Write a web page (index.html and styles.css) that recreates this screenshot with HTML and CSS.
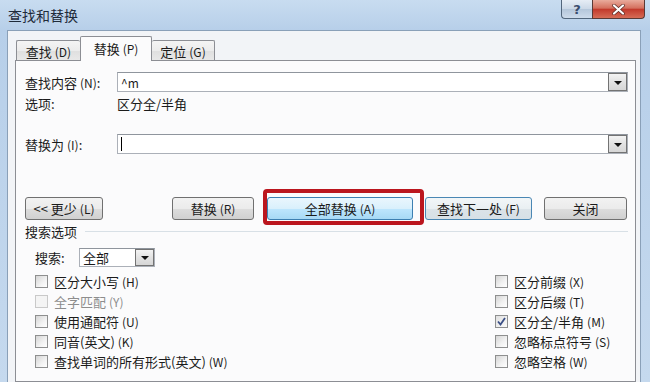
FILE: index.html
```html
<!DOCTYPE html>
<html lang="zh-CN">
<head>
    <meta charset="UTF-8">
    <title>查找和替换</title>
    <link rel="stylesheet" href="styles.css">
</head>
<body>
<div class="window">
    <div class="titlebar">
        <span class="title">查找和替换</span>
        <div class="caption">
            <span class="cap-help">?</span>
            <span class="cap-close">
                <svg width="13" height="11" viewBox="0 0 13 11"><path d="M2 1.5 L11 9.5 M11 1.5 L2 9.5" stroke="#5a2a24" stroke-width="3.6" stroke-linecap="round"/><path d="M2 1.5 L11 9.5 M11 1.5 L2 9.5" stroke="#fff" stroke-width="2.2" stroke-linecap="round"/></svg>
            </span>
        </div>
    </div>

    <div class="client">
        <div class="tabs">
            <div class="tab tab-find">查找<span class="key">(D)</span></div>
            <div class="tab tab-replace">替换<span class="key">(P)</span></div>
            <div class="tab tab-goto">定位<span class="key">(G)</span></div>
        </div>

        <div class="panel">
            <div class="field">
                <span class="label">查找内容<span class="key">(N)</span>:</span>
                <div class="combo"><span class="combo-text">^m</span><span class="drop"><i class="arrow"></i></span></div>
            </div>
            <div class="field options">
                <span class="label">选项:</span>
                <span>区分全/半角</span>
            </div>
            <div class="field replace">
                <span class="label">替换为<span class="key">(I)</span>:</span>
                <div class="combo"><span class="caret"></span><span class="drop"><i class="arrow"></i></span></div>
            </div>

            <div class="buttons">
                <button class="btn btn-less">&lt;&lt; 更少<span class="key">(L)</span></button>
                <button class="btn btn-rep">替换<span class="key">(R)</span></button>
                <button class="btn btn-all">全部替换<span class="key">(A)</span></button>
                <button class="btn btn-next">查找下一处<span class="key">(F)</span></button>
                <button class="btn btn-close">关闭</button>
            </div>

            <div class="group-title"><span>搜索选项</span><span class="rule"></span></div>

            <div class="search-row">
                <span class="search-label">搜索:</span>
                <div class="combo select"><span class="combo-text">全部</span><span class="drop"><i class="arrow"></i></span></div>
            </div>

            <div class="checks">
                <div class="col col-left">
                    <div class="check"><span class="box"></span>区分大小写<span class="key">(H)</span></div>
                    <div class="check disabled"><span class="box"></span>全字匹配<span class="key">(Y)</span></div>
                    <div class="check"><span class="box"></span>使用通配符<span class="key">(U)</span></div>
                    <div class="check"><span class="box"></span>同音(英文)<span class="key">(K)</span></div>
                    <div class="check"><span class="box"></span>查找单词的所有形式(英文)<span class="key">(W)</span></div>
                </div>
                <div class="col col-right">
                    <div class="check"><span class="box"></span>区分前缀<span class="key">(X)</span></div>
                    <div class="check"><span class="box"></span>区分后缀<span class="key">(T)</span></div>
                    <div class="check"><span class="box checked"><svg width="11" height="11" viewBox="0 0 11 11"><path d="M2 5.5 L4.5 8.5 L9 2" fill="none" stroke="#3b4f86" stroke-width="1.8"/></svg></span>区分全/半角<span class="key">(M)</span></div>
                    <div class="check"><span class="box"></span>忽略标点符号<span class="key">(S)</span></div>
                    <div class="check"><span class="box"></span>忽略空格<span class="key">(W)</span></div>
                </div>
            </div>
        </div>
    </div>
</div>
</body>
</html>
```

FILE: styles.css
```css
* {
    box-sizing: border-box;
}

body {
    margin: 0;
    font-family: "Noto Sans CJK SC", "Noto Sans", sans-serif;
    font-size: 13px;
    color: #1b1b1b;
}

.window {
    width: 650px;
    height: 382px;
    overflow: hidden;
    display: flex;
    flex-direction: column;
    background: linear-gradient(180deg, #c8dcf0 0, #b7cfe9 30px, #c5d9ee 100%);
}

/* title bar */
.titlebar {
    height: 30px;
    flex: none;
    display: flex;
    align-items: flex-start;
}

.title {
    padding-left: 8px;
    line-height: 30px;
    font-size: 14px;
    color: #1e2a3a;
}

.caption {
    margin-left: auto;
    margin-right: 5px;
    display: flex;
    height: 19px;
}

.cap-help {
    width: 31px;
    border: 1px solid #52667c;
    border-top: none;
    border-right: none;
    border-radius: 0 0 0 4px;
    background: linear-gradient(#e6edf5, #cbd8e7 50%, #b4c6da 51%, #cddbeb);
    display: flex;
    align-items: center;
    justify-content: center;
    font: bold 13px "DejaVu Sans", sans-serif;
    color: #3a4c6c;
}

.cap-close {
    width: 53px;
    border: 1px solid #5a3a36;
    border-top: none;
    border-radius: 0 0 4px 0;
    background: linear-gradient(#e9ab9c, #d4705e 45%, #c23a2c 52%, #d66c56);
    display: flex;
    align-items: center;
    justify-content: center;
}

/* client area */
.client {
    flex: 1;
    margin: 0 9px 0 7px;
    border: 1px solid #8aa0b8;
    border-bottom: none;
    background: #f2f4f7;
    padding: 4px 4px 0 7px;
    display: flex;
    flex-direction: column;
}

.tabs {
    height: 25px;
    flex: none;
    display: flex;
    align-items: flex-end;
    padding-left: 1px;
    position: relative;
    z-index: 1;
}

.tab {
    height: 20px;
    padding-top: 2px;
    line-height: 17px;
    text-align: center;
    border: 1px solid #8c8e94;
    border-bottom: none;
    border-radius: 2px 2px 0 0;
    background: linear-gradient(#f4f4f4, #ececec 50%, #dfdfdf 51%, #e8e8e8);
}

.tab-find {
    width: 64px;
    border-right: none;
}

.tab-replace {
    width: 72px;
    height: 25px;
    padding-top: 0;
    line-height: 24px;
    margin-bottom: -1px;
    background: #fbfbfc;
}

.tab-goto {
    width: 63px;
    border-left: none;
}

.key {
    font-size: 12px;
    margin-left: 3px;
}

.panel {
    flex: 1;
    border: 1px solid #8c8e94;
    background: #fbfbfc;
    padding: 11px 7px 0 9px;
}

/* text fields */
.field {
    display: flex;
    align-items: center;
    height: 20px;
}

.label {
    width: 92px;
    flex: none;
}

.options {
    margin-top: 1px;
}

.replace {
    margin-top: 21px;
}

.combo {
    flex: 1;
    height: 20px;
    border: 1px solid #abb0b8;
    border-top-color: #8f959d;
    background: #fff;
    display: flex;
    align-items: center;
    padding-left: 3px;
}

.combo-text {
    font-size: 12px;
}

.caret {
    width: 1px;
    height: 14px;
    background: #000;
}

.drop {
    margin-left: auto;
    width: 19px;
    height: 18px;
    border: 1px solid #737373;
    background: linear-gradient(#f3f3f3, #e2e2e2 50%, #d6d6d6);
    display: flex;
    align-items: center;
    justify-content: center;
}

.arrow {
    width: 0;
    height: 0;
    border-left: 4px solid transparent;
    border-right: 4px solid transparent;
    border-top: 4px solid #111;
    margin-top: 1px;
}

/* buttons */
.buttons {
    display: flex;
    margin-top: 43px;
}

.btn {
    height: 23px;
    padding: 0;
    border: 1px solid #707070;
    border-radius: 3px;
    background: linear-gradient(#f2f2f2, #ebebeb 50%, #dddddd 51%, #d0d0d0);
    font: inherit;
    color: #1b1b1b;
}

.btn-less {
    width: 78px;
}

.btn-rep {
    width: 82px;
    margin-left: 69px;
}

.btn-all {
    width: 146px;
    margin-left: 13px;
    position: relative;
    border-color: #3c7fb1;
    background: linear-gradient(#eaf6fd, #d9f0fc 50%, #bee6fd 51%, #a7d9f5);
}

.btn-all::after {
    content: "";
    position: absolute;
    left: -5px;
    right: -12px;
    top: -9px;
    bottom: -6px;
    border: 4px solid #bb161e;
    border-radius: 4px;
}

.btn-next {
    width: 107px;
    margin-left: 12px;
    border-color: #4a87b4;
    background: linear-gradient(#f2f6f8, #e9eff2 50%, #dbe3e8 51%, #d6e0e6);
}

.btn-close {
    width: 83px;
    margin-left: 12px;
}

/* search options */
.group-title {
    display: flex;
    align-items: center;
    height: 18px;
    margin-top: 2px;
}

.rule {
    flex: 1;
    height: 1px;
    margin-left: 8px;
    background: #d8e0e6;
}

.search-row {
    display: flex;
    align-items: center;
    margin-top: 8px;
    padding-left: 10px;
    height: 19px;
}

.search-label {
    width: 44px;
}

.select {
    flex: none;
    width: 76px;
    height: 19px;
}

.select .combo-text {
    font-size: 13px;
}

.select .drop {
    height: 17px;
}

.checks {
    display: flex;
    margin-top: 4px;
}

.col-left {
    width: 470px;
    padding-left: 10px;
}

.check {
    height: 20px;
    display: flex;
    align-items: center;
}

.box {
    width: 13px;
    height: 13px;
    margin-right: 6px;
    border: 1px solid #8e8f8f;
    background: linear-gradient(135deg, #d5d5d5, #f2f2f2 60%, #fff);
    display: flex;
    align-items: center;
    justify-content: center;
}

.box.checked {
    background: linear-gradient(135deg, #e0e0e0, #fafafa);
}

.disabled {
    color: #8d8d8d;
}

.disabled .box {
    border-color: #c9c9c9;
    background: #f4f4f4;
}
```
